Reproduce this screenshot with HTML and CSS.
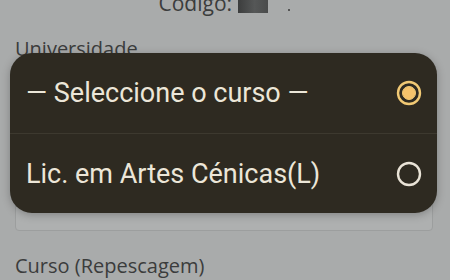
FILE: index.html
```html
<!DOCTYPE html>
<html lang="pt">
<head>
  <meta charset="UTF-8" />
  <meta name="viewport" content="width=device-width, initial-scale=1" />
  <title>Inscrição</title>
  <link rel="stylesheet" href="styles.css">
</head>
<body>
  <div class="page">
    <div class="code">Código: <span class="redacted"></span><span class="dot"></span></div>

    <div class="field">
      <label class="label">Universidade</label>
      <div class="select-box">Escolher</div>
    </div>

    <div class="field">
      <label class="label">Curso (Repescagem)</label>
    </div>
  </div>

  <div class="dialog">
    <div class="option">
      <span>— Seleccione o curso —</span>
      <svg class="radio checked" width="26" height="26" viewBox="0 0 26 26">
        <circle cx="13" cy="13" r="11" fill="none" stroke-width="2.4" />
        <circle class="inner" cx="13" cy="13" r="6.5" />
      </svg>
    </div>
    <div class="option">
      <span>Lic. em Artes Cénicas(L)</span>
      <svg class="radio" width="26" height="26" viewBox="0 0 26 26">
        <circle cx="13" cy="13" r="11" fill="none" stroke-width="2.4" />
      </svg>
    </div>
  </div>
</body>
</html>
```

FILE: styles.css
```css
* { box-sizing: border-box; }
body {
  margin: 0;
  background: #a9abab;
  color: #3b3c3c;
  font-family: 'Open Sans', 'Liberation Sans', sans-serif;
  height: 280px;
  overflow: hidden;
}
.page {
  padding: 0 17px 0 15px;
}
.code {
  margin-top: -10px;
  text-align: center;
  font-size: 21px;
  line-height: 26px;
}
.redacted {
  display: inline-block;
  width: 30px;
  height: 14px;
  vertical-align: -2px;
  background: linear-gradient(90deg, #3c3d3d, #555757 55%, #4a4b4b);
}
.dot {
  display: inline-block;
  width: 2px;
  height: 2px;
  margin-left: 20px;
  background: #555;
}
.field {
  margin-top: 20px;
}
.field + .field {
  margin-top: 22px;
}
.label {
  display: block;
  font-size: 20px;
  line-height: 26px;
}
.select-box {
  margin-top: 119px;
  height: 50px;
  padding: 14px 16px 0;
  border: 1px solid #9c9e9e;
  border-radius: 4px;
  background: #aeb0b0;
  font-size: 17px;
  line-height: 20px;
}
.dialog {
  position: absolute;
  left: 10px;
  top: 53px;
  width: 427px;
  border-radius: 22px;
  background: #2e2a21;
  color: #ece6d8;
  font-family: Roboto, 'Liberation Sans', sans-serif;
  font-size: 27px;
  box-shadow: 0 2px 8px rgba(0, 0, 0, 0.25);
}
.option {
  display: flex;
  align-items: center;
  justify-content: space-between;
  height: 80px;
  padding: 0 15px 0 16px;
}
.option + .option {
  border-top: 1px solid #3d392f;
}
.radio circle { stroke: #e9e3d7; }
.radio.checked circle { stroke: #f1c974; }
.radio .inner { fill: #f6c36b; stroke: none; }
```
